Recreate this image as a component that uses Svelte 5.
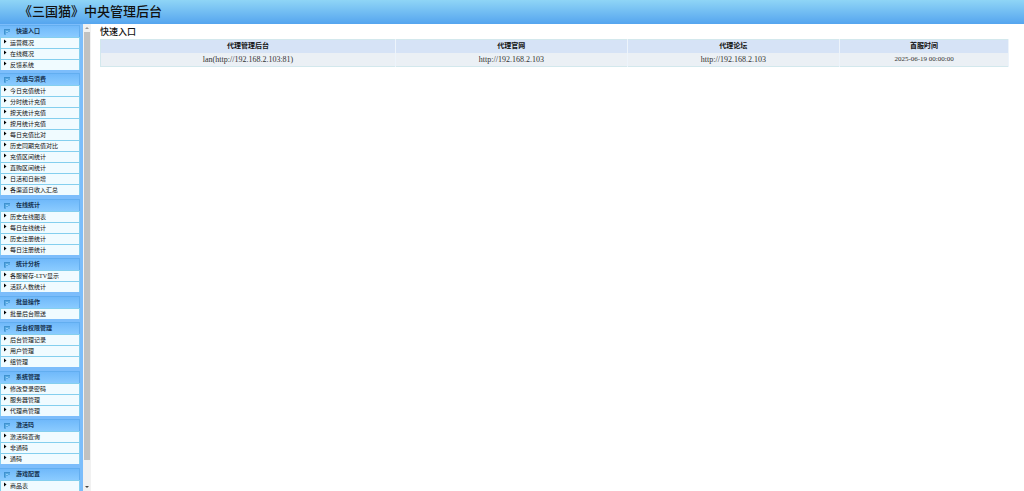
<script>
  const groups = [
    { title: '快速入口', items: ['运营概况', '在线概况', '反馈系统'] },
    {
      title: '充值与消费',
      items: [
        '今日充值统计', '分时统计充值', '按天统计充值', '按月统计充值', '每日充值比对',
        '历史同期充值对比', '充值区间统计', '直购区间统计', '日活和日新增', '各渠道日收入汇总'
      ]
    },
    { title: '在线统计', items: ['历史在线图表', '每日在线统计', '历史注册统计', '每日注册统计'] },
    { title: '统计分析', items: ['各服留存-LTV显示', '活跃人数统计'] },
    { title: '批量操作', items: ['批量后台赠送'] },
    { title: '后台权限管理', items: ['后台管理记录', '用户管理', '组管理'] },
    { title: '系统管理', items: ['修改登录密码', '服务器管理', '代理商管理'] },
    { title: '激活码', items: ['激活码查询', '非通码', '通码'] },
    { title: '游戏配置', items: ['商品表'] }
  ];
</script>

<div class="page">
  <header><h1>《三国猫》中央管理后台</h1></header>
  <div class="body">
    <nav>
      {#each groups as group}
        <section>
          <h2>
            <svg viewBox="0 0 7 6" aria-hidden="true">
              <path d="M0 0h6v3H4v1H2v2H0z" fill="#58a8e2" />
              <path d="M0 0h6v1H1v4H0z" fill="#3f92cf" />
              <path d="M2 2h2v1H2z" fill="#8fd0f7" />
            </svg>
            {group.title}
          </h2>
          <ul>
            {#each group.items as item}
              <li>
                <a href="#top">
                  <svg viewBox="0 0 3 5" aria-hidden="true"><path d="M0 0.5L2.5 2.5L0 4.5z" /></svg>
                  {item}
                </a>
              </li>
            {/each}
          </ul>
        </section>
      {/each}
    </nav>
    <div class="scroll" aria-hidden="true">
      <svg viewBox="0 0 8 8"><path d="M2 5L4 3L6 5z" fill="#999" /></svg>
      <div class="track"><div class="thumb"></div></div>
      <svg viewBox="0 0 8 8"><path d="M2 3L4 5L6 3z" fill="#444" /></svg>
    </div>
    <main>
      <h3>快速入口</h3>
      <table>
        <colgroup>
          <col class="wide" /><col class="mid" /><col class="forum" /><col />
        </colgroup>
        <thead>
          <tr><th>代理管理后台</th><th>代理官网</th><th>代理论坛</th><th>首服时间</th></tr>
        </thead>
        <tbody>
          <tr>
            <td>lan(http://192.168.2.103:81)</td>
            <td>http://192.168.2.103</td>
            <td>http://192.168.2.103</td>
            <td class="date">2025-06-19 00:00:00</td>
          </tr>
        </tbody>
      </table>
    </main>
  </div>
</div>

<style>
  :global(body) {
    margin: 0;
    background: #fff;
  }
  .page {
    display: flex;
    flex-direction: column;
    height: 100vh;
    overflow: hidden;
    color: #111;
    font-family: "Liberation Serif", "Noto Sans CJK SC", serif;
  }
  h1, h2, h3, ul {
    margin: 0;
    padding: 0;
    list-style: none;
  }
  header {
    flex: none;
    height: 24px;
    padding-left: 19px;
    background: linear-gradient(#8fd5f6, #55a5ef);
  }
  h1 {
    font-size: 13px;
    line-height: 23px;
    font-weight: 500;
  }
  .body {
    flex: 1;
    display: flex;
    min-height: 0;
  }
  nav {
    box-sizing: border-box;
    flex: none;
    width: 83px;
    padding: 1px 3px 0 0;
    overflow: hidden;
    background: #7cbdfb;
  }
  section {
    padding-bottom: 3px;
  }
  section:nth-child(even) {
    padding-bottom: 4px;
  }
  h2 {
    box-sizing: border-box;
    display: flex;
    align-items: center;
    gap: 5px;
    height: 12px;
    padding-left: 4px;
    border: 1px solid #62aef0;
    border-width: 1px 1px 0 0;
    background: linear-gradient(#70b9fa, #8acbff);
    color: #16324f;
    font-size: 6px;
    line-height: 11px;
    font-weight: 700;
  }
  h2 svg {
    width: 7px;
    height: 6px;
  }
  li {
    box-sizing: border-box;
    height: 11px;
    border: 1px solid #84cfee;
    border-width: 1px 1px 0 1px;
    background: #f0fbff;
  }
  a {
    display: flex;
    gap: 3px;
    padding-left: 3px;
    color: #111;
    font-size: 6px;
    line-height: 11px;
    white-space: nowrap;
    text-decoration: none;
  }
  a svg {
    width: 3px;
    height: 5px;
    margin-top: 1px;
  }
  .scroll {
    flex: none;
    display: flex;
    flex-direction: column;
    width: 8px;
    background: #f1f1f1;
  }
  .scroll svg {
    width: 8px;
    height: 8px;
  }
  .track {
    flex: 1;
  }
  .thumb {
    height: 95%;
    margin: 0 1px;
    background: #c1c1c1;
  }
  main {
    flex: 1;
    padding: 1px 15px 0 9px;
  }
  h3 {
    font-size: 9px;
    line-height: 14px;
    font-weight: 500;
  }
  table {
    width: 100%;
    border: 1px solid #d3e8ed;
    border-collapse: collapse;
    table-layout: fixed;
    text-align: center;
  }
  .wide {
    width: 32.5%;
  }
  .mid {
    width: 25.5%;
  }
  .forum {
    width: 23.4%;
  }
  th, td {
    height: 13px;
    padding: 0;
    border-right: 1px solid #edf4fb;
    line-height: 13px;
  }
  th {
    background: #d6e3f6;
    font-size: 7px;
  }
  td {
    background: #ebf0f5;
    color: #333;
    font-size: 8px;
  }
  .date {
    font-size: 7px;
  }
</style>
